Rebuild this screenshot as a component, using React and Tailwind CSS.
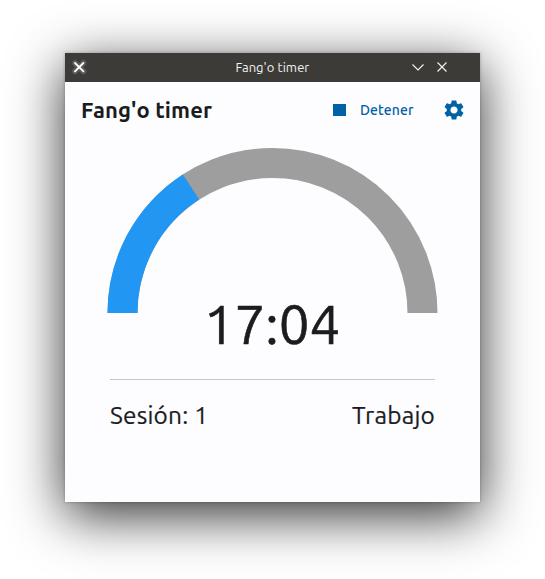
const font = "font-['Ubuntu','Noto_Sans',sans-serif]";

function TitleBar() {
  return (
    <header className="flex h-[29px] shrink-0 items-center bg-[#3c3b37] pb-px pl-[6px] pr-[31px]">
      <svg width="16" height="16" viewBox="0 0 16 16" className="shrink-0" strokeLinecap="round">
        <path d="M4 4l8.4 8.4M12.4 4l-8.4 8.4" stroke="#595959" strokeWidth="6" />
        <path d="M4 4l8.4 8.4M12.4 4l-8.4 8.4" stroke="#fff" strokeWidth="1.9" />
      </svg>
      <span className="ml-[148.5px] w-[76px] whitespace-nowrap text-[13px] leading-[28px] tracking-[0.05px] text-[#f2f2f2]">
        Fang'o timer
      </span>
      <svg width="38" height="14" viewBox="0 0 38 14" className="ml-auto shrink-0" fill="none" stroke="#f5f5f5" strokeWidth="1.1">
        <path d="M1.5 4.5l5.5 5.5L12.5 4.5M26.5 2.5l9 9M35.5 2.5l-9 9" />
      </svg>
    </header>
  );
}

function Toolbar() {
  return (
    <div className="flex h-14 items-center px-4">
      <h1 className="-mt-[2px] whitespace-nowrap text-[22px] font-bold tracking-[0.12px] text-[#1a1c1e]">Fang'o timer</h1>
      <button className="ml-auto flex items-center gap-[14px] text-[#0061a4]">
        <span className="h-[12px] w-[12.5px] bg-[#0061a4]" />
        <span className="w-[54.5px] whitespace-nowrap text-[14px] font-medium tracking-[0.1px]">Detener</span>
      </button>
      <svg width="24" height="24" viewBox="0 0 24 24" className="-mr-[2px] ml-[28px]" fill="#0061a4">
        <path d="M19.14 12.94c.04-.3.06-.61.06-.94 0-.32-.02-.64-.07-.94l2.03-1.58a.49.49 0 0 0 .12-.61l-1.92-3.32a.488.488 0 0 0-.59-.22l-2.39.96c-.5-.38-1.03-.7-1.62-.94l-.36-2.54a.484.484 0 0 0-.48-.41h-3.84c-.24 0-.43.17-.47.41l-.36 2.54c-.59.24-1.13.57-1.62.94l-2.39-.96c-.22-.08-.47 0-.59.22L2.74 8.87c-.12.21-.08.47.12.61l2.03 1.58c-.05.3-.09.63-.09.94s.02.64.07.94l-2.03 1.58a.49.49 0 0 0-.12.61l1.92 3.32c.12.22.37.29.59.22l2.39-.96c.5.38 1.03.7 1.62.94l.36 2.54c.05.24.24.41.48.41h3.84c.24 0 .44-.17.47-.41l.36-2.54c.59-.24 1.13-.56 1.62-.94l2.39.96c.22.08.47 0 .59-.22l1.92-3.32c.12-.22.07-.47-.12-.61l-2.01-1.58zM12 15.6c-1.98 0-3.6-1.62-3.6-3.6s1.62-3.6 3.6-3.6 3.6 1.62 3.6 3.6-1.62 3.6-3.6 3.6z" />
      </svg>
    </div>
  );
}

function Gauge() {
  return (
    <svg width="331" height="165" viewBox="0 0 331 165" className="mt-[10px] shrink-0" fill="none" strokeWidth="30">
      <path d="M15.5 165A150 150 0 0 1 315.5 165" stroke="#9e9e9e" />
      <path d="M15.5 165A150 150 0 0 1 315.5 165" stroke="#2196f3" pathLength="180" strokeDasharray="57.12 360" />
    </svg>
  );
}

export default function App() {
  return (
    <main className={`h-[579px] w-[545px] overflow-hidden bg-white pl-[65px] pt-[53px] ${font}`}>
      <section className="flex h-[449px] w-[415px] flex-col bg-[#fdfcff] text-[#1a1c1e] shadow-[0_13px_50px_rgba(0,0,0,0.82),0_0_3px_rgba(0,0,0,0.25)]">
        <TitleBar />
        <Toolbar />
        <div className="flex flex-col items-center">
          <Gauge />
          <div className="-mt-[23px] mr-px h-[68px] whitespace-nowrap text-[54.6px] leading-[68px] [-webkit-text-stroke:0.6px_#1a1c1e]">17:04</div>
          <div className="mt-[21px] h-px w-[325px] bg-[#c3c7cf]" />
          <div className="mt-[19px] flex w-[325px] justify-between whitespace-nowrap text-[24.4px] leading-8 tracking-[0.2px] [-webkit-text-stroke:0.2px_#1a1c1e]">
            <span>Sesión: 1</span>
            <span>Trabajo</span>
          </div>
        </div>
      </section>
    </main>
  );
}
